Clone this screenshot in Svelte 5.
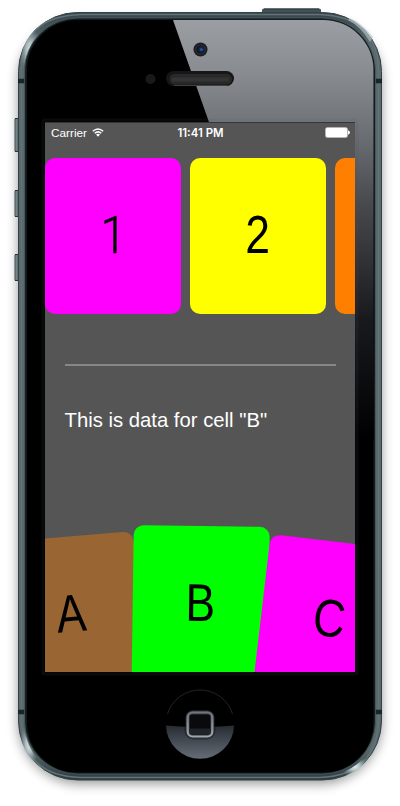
<script>
  const topCells = [
    { label: '1', color: '#ff00ff' },
    { label: '2', color: '#ffff00' },
    { label: '', color: '#ff8000' },
  ];
  const wheel = [
    { label: 'A', color: '#996633', x: -0.5, y: 13.5, angle: -4.8 },
    { label: 'B', color: '#00ff00', x: -0.3, y: 3, angle: 0.8 },
    { label: 'C', color: '#ff00ff', x: 0.2, y: 18.5, angle: 6.7 },
  ];
  const sideButtons = [[118, 34], [190, 27], [254, 27]];
</script>

<main class="phone">
  <svg class="body" width="400" height="806" viewBox="0 0 400 806" aria-hidden="true">
    <defs>
      <linearGradient id="rim" x1="0" y1="0" x2="0" y2="1">
        <stop offset="0" stop-color="#35454a" /><stop offset=".04" stop-color="#5a696d" />
        <stop offset=".96" stop-color="#59686b" /><stop offset="1" stop-color="#2c3b3f" />
      </linearGradient>
      <linearGradient id="gloss" gradientUnits="userSpaceOnUse" x1="0" y1="20" x2="0" y2="440">
        <stop offset="0" stop-color="#9b9ea3" /><stop offset=".12" stop-color="#898c91" />
        <stop offset=".24" stop-color="#72767b" /><stop offset=".43" stop-color="#4a4b4f" />
        <stop offset=".71" stop-color="#191a1e" /><stop offset="1" stop-color="#000" />
      </linearGradient>
      <linearGradient id="home" x1="0" y1="0" x2="0" y2="1">
        <stop offset="0" stop-color="#171b20" /><stop offset=".5" stop-color="#262b32" /><stop offset="1" stop-color="#666c77" />
      </linearGradient>
      <linearGradient id="square" x1="0" y1="0" x2="0" y2="1">
        <stop offset="0" stop-color="#73757b" /><stop offset="1" stop-color="#a0a5ad" />
      </linearGradient>
      <linearGradient id="key" x1="0" y1="0" x2="1" y2="0">
        <stop offset="0" stop-color="#39464b" /><stop offset=".35" stop-color="#7c898c" /><stop offset="1" stop-color="#34444a" />
      </linearGradient>
      <radialGradient id="lens" cx=".6" cy=".5"><stop offset="0" stop-color="#2769c7" /><stop offset=".5" stop-color="#14284d" /><stop offset="1" stop-color="#101319" /></radialGradient>
      <radialGradient id="shine"><stop offset="0" stop-color="#e2ecee" /><stop offset=".4" stop-color="#afbdc0" /><stop offset="1" stop-color="#829296" stop-opacity="0" /></radialGradient>
      <filter id="shadow" x="-20%" y="-10%" width="140%" height="120%"><feGaussianBlur stdDeviation="6" /></filter>
      <clipPath id="glass"><rect x="27" y="20" width="346.5" height="752.5" rx="50" /></clipPath>
      <clipPath id="lower"><path d="M160 725Q200 729 240 725V765H160Z" /></clipPath>
    </defs>
    <rect x="18" y="20" width="364" height="764" rx="62" fill="#000" opacity=".4" filter="url(#shadow)" />
    <path d="M262 13V10Q262 8.500 264 8.500H319Q321 8.500 321 10V13Z" fill="#435257" />
    <path d="M264 9H319" stroke="#2b393e" />
    {#each sideButtons as [y, h]}
      <rect x="14.500" y={y} width="5" height={h} rx="1.500" fill="url(#key)" />
      <path d="M15 {y + .5}h4M15 {y + h - .5}h4" stroke="#26353a" />
    {/each}
    <rect x="18.500" y="12.500" width="363" height="767.500" rx="59" fill="url(#rim)" stroke="#334247" />
    <path d="M21.500 85V70Q22 16 81 14.500H319Q377 16 378.500 70V720Q377 776 319 777.500H81Q22 776 21.500 720Z" fill="none" stroke="#637276" stroke-width="1.500" />
    <path d="M19.500 65Q21 42 37 28L42 32Q25 49 23 74Z" fill="url(#shine)" />
    <path d="M350 18Q361 22 373 37L370 42Q360 26 348 20Z" fill="#bbc8cb" opacity=".6" />
    <path d="M19.500 733Q22 752 36 765L40 762Q26 747 23 723Z" fill="url(#shine)" />
    <path d="M343 777Q361 770 369 759L365 756Q356 768 340 773Z" fill="url(#shine)" />
    <path d="M18 81H25M375 81H382M18 712H25M375 712H382" stroke="#18262a" stroke-width="4.500" />
    <rect x="24.500" y="18" width="351" height="756" rx="53" fill="#131d21" stroke="#536166" stroke-width=".7" />
    <rect x="27" y="20" width="346.500" height="752.500" rx="50" fill="#000" />
    <path d="M173 20H374V440H321Z" fill="url(#gloss)" clip-path="url(#glass)" />
    <rect x="43" y="120" width="314" height="554" rx="2" fill="none" stroke="#46545f" stroke-width="3" opacity=".12" />
    <circle cx="150.500" cy="79" r="5" fill="#18191b" />
    <circle cx="200.500" cy="49.500" r="7" fill="#1b1d21" />
    <circle cx="200.500" cy="49.500" r="5.300" fill="#2b2d33" />
    <circle cx="200.500" cy="49.500" r="4" fill="url(#lens)" />
    <rect x="166" y="71" width="68" height="15" rx="7.500" fill="#151617" />
    <rect x="169.500" y="74" width="62.500" height="10.500" rx="5" fill="#282829" />
    <path d="M172 79.500H229" stroke="#343435" stroke-width="4" />
    <path d="M174 85.500H227" stroke="#4a4b4d" stroke-width=".8" />
    <path d="M167.500 714A34 34 0 0 1 232.500 714" fill="none" stroke="#262729" stroke-width=".9" />
    <circle cx="200" cy="724.800" r="34" fill="url(#home)" clip-path="url(#lower)" />
    <rect x="184.500" y="709.500" width="31" height="30" rx="9" fill="#08090b" opacity=".4" />
    <rect x="187.700" y="712.500" width="24.600" height="24" rx="5" fill="#080a0c" stroke="#30343a" stroke-width="4" />
    <path d="M190 728.500H210V734H190Z" fill="#20242a" />
    <rect x="187.700" y="712.500" width="24.600" height="24" rx="5" fill="none" stroke="url(#square)" stroke-width="2.200" />
  </svg>

  <section class="screen">
    <header>
      <span class="carrier">Carrier
        <svg width="12" height="9" viewBox="0 0 12 9">
          <path d="M.8 3.300Q6-1.300 11.200 3.300M2.700 5.300Q6 2.500 9.300 5.300" fill="none" stroke="#fff" stroke-width="1.500" />
          <path d="M4 6.600Q6 5.100 8 6.600L6 8.800Z" fill="#fff" />
        </svg>
      </span>
      <span class="time">11:41 PM</span>
      <span class="battery"><svg width="25" height="11" viewBox="0 0 25 11">
        <rect x=".5" y=".5" width="22" height="10" rx="1.800" fill="#fff" stroke="#bbb" stroke-width=".6" />
        <path d="M23 3.300Q25 4.200 25 5.500T23 7.700Z" fill="#fff" />
      </svg></span>
    </header>
    <div class="row">
      {#each topCells as cell}
        <div class="cell" style:background={cell.color}><span class:one={cell.label === '1'}>{cell.label}</span></div>
      {/each}
    </div>
    <hr />
    <p>This is data for cell "B"</p>
    <div class="wheel">
      {#each wheel as cell}
        <div class="cell" style:background={cell.color} style:transform="translate({cell.x}px, {cell.y}px) rotate({cell.angle}deg)"><span>{cell.label}</span></div>
      {/each}
    </div>
  </section>
</main>

<style>
  :global(body) { margin: 0; background: #fff; }
  .phone {
    position: relative;
    box-sizing: border-box;
    width: 400px;
    height: 806px;
    padding: 122px 45px 134px;
    overflow: hidden;
    font-family: "Liberation Sans", Arial, sans-serif;
  }
  .body { position: absolute; inset: 0; }
  .screen {
    position: relative;
    display: flex;
    flex-direction: column;
    width: 310px;
    height: 550px;
    overflow: hidden;
    background: #555;
    box-shadow: inset 0 1px #353535;
  }
  header {
    display: grid;
    grid-template-columns: 1fr auto 1fr;
    align-items: center;
    height: 21px;
    padding: 0 5px 0 6px;
    color: #fff;
    font-size: 11.8px;
    flex: none;
  }
  .carrier { display: flex; align-items: center; gap: 5px; }
  .time { font-family: Inter, sans-serif; font-weight: 600; font-size: 11.4px; }
  .battery { display: flex; justify-content: flex-end; }
  .row { display: flex; gap: 9px; margin-top: 15px; flex: none; }
  .cell {
    display: flex;
    align-items: center;
    justify-content: center;
    flex: none;
    width: 136px;
    height: 155.5px;
    border-radius: 10px;
    color: #000;
    font: 400 53px/1 "Liberation Sans", Arial, sans-serif;
  }
  .cell span { transform: translateY(-1px) scaleX(.84); }
  .cell .one {
    font: 300 52px/1 Roboto, sans-serif;
    -webkit-text-stroke: .6px #000;
    transform: scaleX(.88);
  }
  hr {
    width: 271px;
    height: 1.5px;
    flex: none;
    margin: 50.5px auto 0;
    border: 0;
    background: #878787;
  }
  p {
    flex: none;
    margin: 42px 0 0 19.5px;
    color: #fff;
    font-size: 20.3px;
    line-height: 24px;
    white-space: nowrap;
  }
  .wheel { display: flex; margin: 91px 0 0 -40.7px; }
  .wheel .cell { margin-right: -7.6px; }
</style>
